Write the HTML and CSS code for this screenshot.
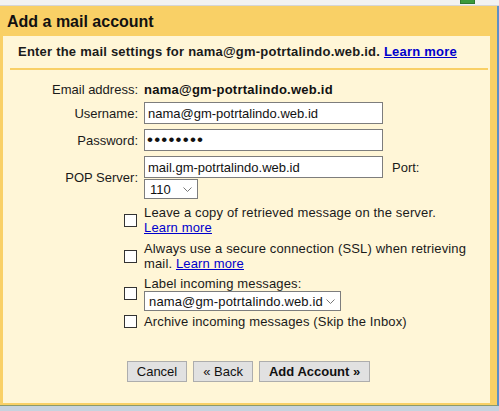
FILE: index.html
```html
<!DOCTYPE html>
<html lang="en">

<head>
    <meta charset="UTF-8">
    <title>Add a mail account</title>
    <link rel="stylesheet" href="styles.css">
</head>

<body>
    <div class="topbar"><span class="topbar-mark"></span></div>
    <div class="dialog">
        <div class="title">Add a mail account</div>
        <div class="content">
            <div class="intro">Enter the mail settings for nama@gm-potrtalindo.web.id. <a href="#">Learn more</a></div>

            <div class="row row-email">
                <div class="label">Email address:</div>
                <div class="field"><b>nama@gm-potrtalindo.web.id</b></div>
            </div>
            <div class="row row-input">
                <div class="label">Username:</div>
                <div class="field"><input type="text" class="text-input" value="nama@gm-potrtalindo.web.id"></div>
            </div>
            <div class="row row-input">
                <div class="label">Password:</div>
                <div class="field"><input type="password" class="text-input password-input" value="12345678"></div>
            </div>
            <div class="row row-input">
                <div class="label">POP Server:</div>
                <div class="field">
                    <div class="server-line">
                        <input type="text" class="text-input" value="mail.gm-potrtalindo.web.id">
                        <span class="port-label">Port:</span>
                    </div>
                    <div class="select select-port">
                        <span>110</span>
                        <svg width="9" height="5" viewBox="0 0 9 5"><path d="M0.5 0.5 L4.5 4.5 L8.5 0.5" fill="none" stroke="#777" stroke-width="1"/></svg>
                    </div>
                </div>
            </div>

            <div class="row row-check first-check">
                <div class="label"><input type="checkbox" class="check"></div>
                <div class="field check-text">Leave a copy of retrieved message on the server.<br><a href="#">Learn more</a></div>
            </div>
            <div class="row row-check">
                <div class="label"><input type="checkbox" class="check"></div>
                <div class="field check-text">Always use a secure connection (SSL) when retrieving mail. <a href="#">Learn more</a></div>
            </div>
            <div class="row row-check label-check">
                <div class="label"><input type="checkbox" class="check"></div>
                <div class="field check-text">
                    Label incoming messages:
                    <div class="select select-label">
                        <span>nama@gm-potrtalindo.web.id</span>
                        <svg width="9" height="5" viewBox="0 0 9 5"><path d="M0.5 0.5 L4.5 4.5 L8.5 0.5" fill="none" stroke="#777" stroke-width="1"/></svg>
                    </div>
                </div>
            </div>
            <div class="row row-check archive-check">
                <div class="label"><input type="checkbox" class="check"></div>
                <div class="field check-text">Archive incoming messages (Skip the Inbox)</div>
            </div>

            <div class="buttons">
                <button class="btn">Cancel</button>
                <button class="btn">&laquo; Back</button>
                <button class="btn btn-main">Add Account &raquo;</button>
            </div>
        </div>
    </div>
</body>

</html>
```

FILE: styles.css
```css
body {
    margin: 0;
    font-family: "Liberation Sans", Arial, sans-serif;
    font-size: 13px;
    color: #1a1a1a;
    background: #c7d3df;
}

.topbar {
    height: 5px;
    background: #f2f2f2;
    border-bottom: 1px solid #d6d6d6;
    display: flex;
    justify-content: flex-end;
    padding-right: 24px;
}

.topbar-mark {
    width: 13px;
    height: 3px;
    background: #3c9a3c;
    border: 1px solid #2f7a2f;
    border-top: none;
}

.dialog {
    width: 487px;
    background: #f9d066;
    padding: 0 7px 2px 3px;
    border-right: 2px solid #5d8fc7;
    border-bottom: 1px solid #8c9a6c;
}

.title {
    height: 30px;
    line-height: 32px;
    padding-left: 4px;
    font-size: 16px;
    font-weight: bold;
    color: #111;
}

.content {
    background: #fff6d7;
    height: 367px;
}

.content a {
    color: #0000cc;
}

.intro {
    margin: 0 2px 0 7px;
    padding: 8px 8px 8px;
    line-height: 16px;
    font-weight: bold;
    letter-spacing: 0.22px;
    border-bottom: 2px solid #f9d066;
}

.row {
    display: flex;
    align-items: center;
    line-height: 15px;
}

.label {
    width: 135px;
    flex-shrink: 0;
    text-align: right;
}

.field {
    margin-left: 6px;
}

.row-email {
    margin-top: 12px;
}

.row-email b {
    color: #111;
    letter-spacing: 0.25px;
}

.row-input {
    margin-top: 5px;
}

.text-input {
    display: block;
    box-sizing: border-box;
    width: 239px;
    height: 22px;
    margin: 0;
    padding: 0 3px;
    border: 1px solid #7d7d7d;
    background: #fff;
    font-family: "Liberation Sans", Arial, sans-serif;
    font-size: 13px;
    color: #111;
    outline: none;
}

.password-input {
    font-size: 17px;
    letter-spacing: 1.2px;
    padding-left: 2px;
}

.server-line {
    display: flex;
    align-items: center;
}

.port-label {
    margin-left: 9px;
}

.select {
    box-sizing: border-box;
    height: 20px;
    margin-top: 1px;
    border: 1px solid #7d7d7d;
    background: #fff;
    display: flex;
    align-items: center;
    justify-content: space-between;
    padding: 0 5px 0 5px;
    color: #111;
}

.select-port {
    width: 54px;
}

.select-label {
    width: 197px;
    margin-top: 0;
    padding-left: 4px;
}

.check {
    appearance: none;
    box-sizing: border-box;
    width: 13px;
    height: 13px;
    margin: 0 1px 0 0;
    border: 1px solid #333;
    background: #fff;
    vertical-align: middle;
}

.label .check {
    display: block;
    margin-left: auto;
}

.check-text {
    width: 332px;
    letter-spacing: 0.15px;
}

.row-check {
    margin-top: 6px;
}

.first-check {
    margin-top: 6px;
}

.label-check {
    margin-top: 5px;
}

.archive-check {
    margin-top: 3px;
}

.buttons {
    display: flex;
    justify-content: center;
    gap: 6px;
    margin-top: 32px;
    padding-left: 4px;
}

.btn {
    height: 21px;
    padding: 0 9px;
    border: 1px solid #adadad;
    background: #e1e1e1;
    font-family: "Liberation Sans", Arial, sans-serif;
    font-size: 13px;
    color: #111;
}

.btn-main {
    font-weight: bold;
}
```
